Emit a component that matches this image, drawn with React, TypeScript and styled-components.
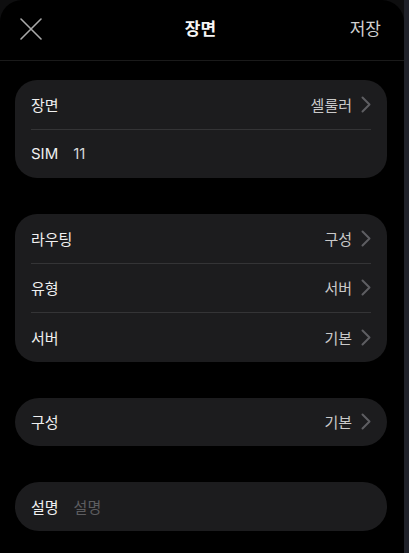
import React from "react";
import styled, { createGlobalStyle } from "styled-components";

const GlobalStyle = createGlobalStyle`
  html, body {
    margin: 0;
    padding: 0;
    background: #0e0e0f;
  }
  body {
    font-family: "Inter", "Noto Sans CJK KR", sans-serif;
    -webkit-font-smoothing: antialiased;
  }
`;

const Page = styled.div`
  display: flex;
  width: 409px;
  height: 553px;
  overflow: hidden;
`;

const Sheet = styled.div`
  flex: 1;
  background: #000;
  border-top-left-radius: 22px;
  border-top-right-radius: 22px;
  display: flex;
  flex-direction: column;
`;

const Rail = styled.div`
  width: 5px;
  background: #1f2129;
`;

const Header = styled.header`
  height: 60px;
  display: grid;
  grid-template-columns: 1fr auto 1fr;
  align-items: center;
  padding: 0 23px 0 20px;
  border-bottom: 1px solid #1a1a1a;
`;

const CloseButton = styled.button`
  justify-self: start;
  width: 22px;
  height: 22px;
  padding: 0;
  margin-top: -3px;
  border: none;
  background: none;
  display: flex;
`;

const Title = styled.h1`
  margin: 0;
  margin-top: -5px;
  font-size: 17px;
  font-weight: 700;
  color: #f5f5f5;
`;

const SaveButton = styled.button`
  justify-self: end;
  margin-top: -5px;
  border: none;
  background: none;
  padding: 0;
  font-family: inherit;
  font-size: 17px;
  color: #d0d0d0;
`;

const Content = styled.main`
  display: flex;
  flex-direction: column;
  gap: 36px;
  padding: 19px 17px 0 15px;
`;

const Card = styled.section<{ $pill?: boolean }>`
  background: #1c1c1e;
  border-radius: ${(p) => (p.$pill ? "24px" : "22px")};
  padding: 0 16px;
`;

const Row = styled.div`
  height: 48.5px;
  display: flex;
  align-items: center;
  gap: 15px;
  font-size: 15px;
  color: #f0f0f0;
  & + & {
    border-top: 1px solid #343436;
  }
`;

const Label = styled.span``;

const Value = styled.span<{ $muted?: boolean }>`
  color: ${(p) => (p.$muted ? "#5d5d60" : "#d6d6d6")};
`;

const Trailing = styled.span`
  margin-left: auto;
  display: flex;
  align-items: center;
  gap: 9px;
  color: #c9c9c9;
`;

const Chevron = () => (
  <svg width="10" height="17" viewBox="0 0 10 17" fill="none">
    <path d="M1.5 1.5 L8.5 8.5 L1.5 15.5" stroke="#5e5e62" strokeWidth="2" strokeLinecap="round" strokeLinejoin="round" />
  </svg>
);

const CloseIcon = () => (
  <svg width="22" height="22" viewBox="0 0 22 22" fill="none">
    <path d="M1 1 L21 21 M21 1 L1 21" stroke="#a9a9a9" strokeWidth="1.6" strokeLinecap="round" />
  </svg>
);

const NavRow = ({ label, value }: { label: string; value: string }) => (
  <Row>
    <Label>{label}</Label>
    <Trailing>
      {value}
      <Chevron />
    </Trailing>
  </Row>
);

export default function App() {
  return (
    <>
      <GlobalStyle />
      <Page>
        <Sheet>
          <Header>
            <CloseButton aria-label="닫기">
              <CloseIcon />
            </CloseButton>
            <Title>장면</Title>
            <SaveButton>저장</SaveButton>
          </Header>
          <Content>
            <Card>
              <NavRow label="장면" value="셀룰러" />
              <Row>
                <Label>SIM</Label>
                <Value>11</Value>
              </Row>
            </Card>
            <Card>
              <NavRow label="라우팅" value="구성" />
              <NavRow label="유형" value="서버" />
              <NavRow label="서버" value="기본" />
            </Card>
            <Card $pill>
              <NavRow label="구성" value="기본" />
            </Card>
            <Card $pill>
              <Row>
                <Label>설명</Label>
                <Value $muted>설명</Value>
              </Row>
            </Card>
          </Content>
        </Sheet>
        <Rail />
      </Page>
    </>
  );
}
